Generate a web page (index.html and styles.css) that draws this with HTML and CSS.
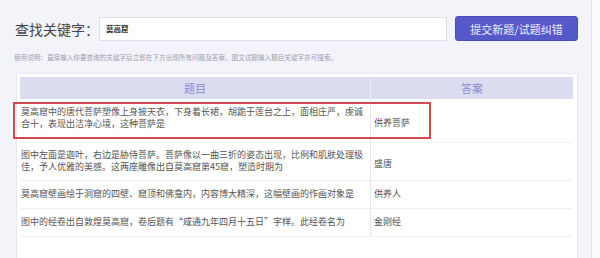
FILE: index.html
```html
<!DOCTYPE html>
<html lang="zh">
<head>
<meta charset="utf-8">
<link rel="stylesheet" href="styles.css">
</head>
<body>
<div class="layout">
  <div class="main">
    <div class="search">
      <span class="label">查找关键字：</span>
      <div class="input">莫高窟</div>
      <button class="btn">提交新题/试题纠错</button>
    </div>
    <p class="usage">使用说明：直接输入你要查询的关键字后立即在下方出现所有问题及答案，图文试题输入题目关键字亦可搜索。</p>
    <div class="card">
      <table class="qa">
        <thead>
          <tr><th class="q">题目</th><th class="a">答案</th></tr>
        </thead>
        <tbody>
          <tr class="r1"><td class="q">莫高窟中的唐代菩萨塑像上身披天衣，下身着长裙，胡跪于莲台之上，面相庄严，虔诚合十，表现出洁净心境，这种菩萨是</td><td class="a">供养菩萨</td></tr>
          <tr class="r2"><td class="q">图中左面是迦叶，右边是胁侍菩萨。菩萨像以一曲三折的姿态出现，比例和肌肤处理极佳，予人优雅的美感。这两座雕像出自莫高窟第45窟，塑造时期为</td><td class="a">盛唐</td></tr>
          <tr class="r3"><td class="q">莫高窟壁画绘于洞窟的四壁、窟顶和佛龛内，内容博大精深，这幅壁画的作画对象是</td><td class="a">供养人</td></tr>
          <tr class="r3"><td class="q">图中的经卷出自敦煌莫高窟，卷后题有“咸通九年四月十五日”字样。此经卷名为</td><td class="a">金刚经</td></tr>
        </tbody>
      </table>
      <div class="highlight"></div>
    </div>
  </div>
  <div class="side"></div>
</div>
</body>
</html>
```

FILE: styles.css
```css
html, body {
  margin: 0;
  padding: 0;
}
body {
  width: 600px;
  height: 258px;
  overflow: hidden;
  background: #f3f3fa;
  font-family: "Noto Sans CJK SC", "Noto Sans", sans-serif;
  color: #555;
}
.layout {
  display: flex;
  height: 258px;
}
.main {
  width: 591px;
  padding: 16px 13px 0 15px;
  box-sizing: border-box;
}
.side {
  flex: 1;
  border-left: 1px solid #e2e2ee;
  background: #fbfbfe;
}
.search {
  display: flex;
  align-items: center;
  height: 25px;
}
.label {
  flex: none;
  font-size: 14px;
  color: #444;
  width: 84px;
  white-space: nowrap;
}
.input {
  flex: none;
  width: 348px;
  height: 24px;
  box-sizing: border-box;
  background: #fff;
  border: 1px solid #e0e0e8;
  font-size: 7.5px;
  font-weight: bold;
  color: #333;
  line-height: 22px;
  padding-left: 6px;
}
.btn {
  flex: none;
  margin-left: 8px;
  width: 123px;
  height: 25px;
  border: 1px solid #4a4db8;
  border-radius: 3px;
  background: #5659c9;
  color: #eef;
  font-family: "Noto Sans CJK SC", sans-serif;
  font-size: 11px;
  padding: 0;
}
.usage {
  margin: 11px 0 0 -1px;
  font-size: 6.6px;
  line-height: 10px;
  color: #a0a0ae;
  white-space: nowrap;
}
.card {
  position: relative;
  margin-top: 11px;
  margin-left: 1px;
  height: 190px;
  background: #fff;
  border: 1px solid #e8e8f0;
  padding: 3px 4px 0 3px;
  box-sizing: border-box;
}
.qa {
  width: 100%;
  border-collapse: collapse;
  table-layout: fixed;
}
.qa th {
  height: 22px;
  background: #dcdcf1;
  color: #8a8ad2;
  font-weight: normal;
  font-size: 11px;
  padding: 0;
}
.qa th.q {
  width: 350px;
  border-right: 1px solid #ececf6;
}
.qa td {
  font-size: 9px;
  line-height: 12px;
  color: #555;
  border-bottom: 1px solid #f0f0f4;
  vertical-align: middle;
  padding: 0 4px 0 1px;
}
.qa td.q {
  border-right: 1px solid #e6e6ee;
}
.qa td.a {
  padding-left: 3px;
}
.qa tr.r1 { height: 43px; }
.qa tr.r2 { height: 38px; }
.qa tr.r3 { height: 28px; }
.qa tr.r1 td.q { padding-bottom: 4px; }
.qa tr.r1 td.a,
.qa tr.r2 td.a { padding-top: 5px; }
.highlight {
  position: absolute;
  left: -4px;
  top: 28px;
  width: 418px;
  height: 37px;
  border: 2px solid #d24a4f;
  box-sizing: border-box;
}
```
